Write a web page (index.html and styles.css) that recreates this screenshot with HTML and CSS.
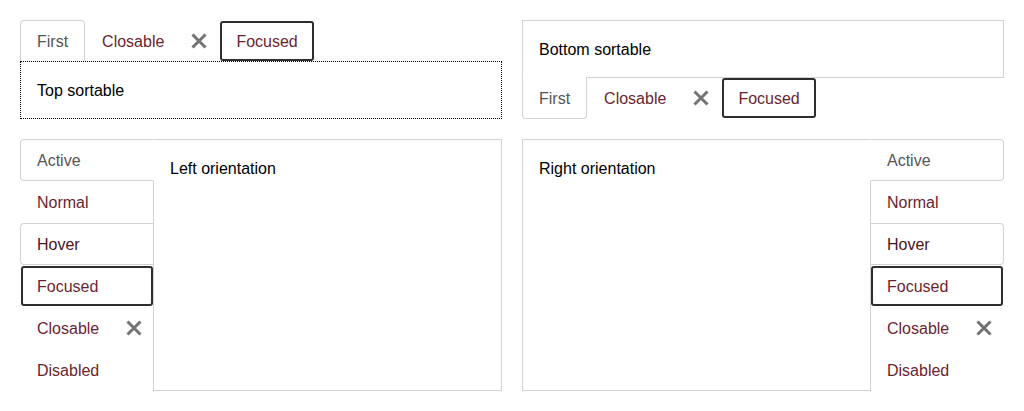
FILE: index.html
```html
<!DOCTYPE html>
<html lang="en">
<head>
<meta charset="utf-8">
<title>Tabs</title>
<link rel="stylesheet" href="styles.css">
</head>
<body>
<div class="grid">
  <div class="tabs tabs-top">
    <div class="tablist">
      <div class="tab active">First</div>
      <div class="tab closable">Closable<span class="close"><svg viewBox="0 0 16 16" width="16" height="16"><path d="M1.5 1.5L14.5 14.5M14.5 1.5L1.5 14.5"/></svg></span></div>
      <div class="tab focused">Focused</div>
    </div>
    <div class="panel panel-focus">Top sortable</div>
  </div>

  <div class="tabs tabs-bottom">
    <div class="panel">Bottom sortable</div>
    <div class="tablist">
      <div class="tab active">First</div>
      <div class="tab closable">Closable<span class="close"><svg viewBox="0 0 16 16" width="16" height="16"><path d="M1.5 1.5L14.5 14.5M14.5 1.5L1.5 14.5"/></svg></span></div>
      <div class="tab focused">Focused</div>
    </div>
  </div>

  <div class="tabs tabs-left">
    <div class="tablist">
      <div class="tab active">Active</div>
      <div class="tab">Normal</div>
      <div class="tab hover">Hover</div>
      <div class="tab focused">Focused</div>
      <div class="tab closable">Closable<span class="close"><svg viewBox="0 0 16 16" width="16" height="16"><path d="M1.5 1.5L14.5 14.5M14.5 1.5L1.5 14.5"/></svg></span></div>
      <div class="tab disabled">Disabled</div>
    </div>
    <div class="panel">Left orientation</div>
  </div>

  <div class="tabs tabs-right">
    <div class="panel">Right orientation</div>
    <div class="tablist">
      <div class="tab active">Active</div>
      <div class="tab">Normal</div>
      <div class="tab hover">Hover</div>
      <div class="tab focused">Focused</div>
      <div class="tab closable">Closable<span class="close"><svg viewBox="0 0 16 16" width="16" height="16"><path d="M1.5 1.5L14.5 14.5M14.5 1.5L1.5 14.5"/></svg></span></div>
      <div class="tab disabled">Disabled</div>
    </div>
  </div>
</div>
</body>
</html>
```

FILE: styles.css
```css
* { box-sizing: border-box; }

html, body {
  margin: 0;
  background: #fff;
}

body {
  font-family: "Liberation Sans", Arial, sans-serif;
  font-size: 16px;
  line-height: 24px;
  color: #000;
}

.grid {
  display: grid;
  grid-template-columns: 482px 482px;
  grid-template-rows: 99px 252px;
  gap: 20px;
  padding: 20px;
}

.tabs {
  display: flex;
}

.tabs-top,
.tabs-bottom {
  flex-direction: column;
  align-items: stretch;
}

.tablist {
  display: flex;
}

.tab {
  display: flex;
  align-items: center;
  height: 42px;
  padding: 9px 16px 7px;
  border: 1px solid transparent;
  color: #6b1f30;
  white-space: nowrap;
  background: transparent;
}

.tab.active {
  color: #555;
  border-color: #d2d2d2;
  background: #fff;
  position: relative;
  z-index: 1;
}

.tab.hover {
  color: #4a1322;
  border-color: #d2d2d2;
}

.tab.focused {
  outline: 2px solid #2e2e2e;
  outline-offset: -3px;
  border-radius: 4px;
}

.tab.closable {
  padding-right: 3px;
}

.close {
  display: flex;
  align-items: center;
  justify-content: center;
  width: 32px;
  height: 24px;
  margin-left: 19px;
  margin-top: -2px;
  flex: none;
}

.close svg path {
  stroke: #737373;
  stroke-width: 3;
  fill: none;
}

.panel {
  border: 1px solid #d2d2d2;
  padding: 17px 16px 15px;
  background: #fff;
}

.panel-focus {
  border: 1px dotted #000;
  position: relative;
  z-index: 2;
}

/* top */
.tabs-top .tablist { margin-bottom: -1px; }
.tabs-top .tab.active {
  border-bottom-color: #fff;
  border-radius: 4px 4px 0 0;
}
.tabs-top .panel { flex: 1; }

/* bottom */
.tabs-bottom .panel { height: 58px; }
.tabs-bottom .tablist { margin-top: -1px; }
.tabs-bottom .tab.active {
  border-top-color: #fff;
  border-radius: 0 0 4px 4px;
}

/* vertical */
.tabs-left .tablist,
.tabs-right .tablist {
  flex-direction: column;
  width: 134px;
  flex: none;
}
.tabs-left .panel,
.tabs-right .panel { flex: 1; }

.tabs-left .tablist { margin-right: -1px; }
.tabs-left .tab.active {
  border-right-color: #fff;
  border-radius: 4px 0 0 4px;
}
.tabs-left .tab.hover {
  border-right-color: transparent;
  border-radius: 4px 0 0 4px;
}

.tabs-right .tablist { margin-left: -1px; }
.tabs-right .tab.active {
  border-left-color: #fff;
  border-radius: 0 4px 4px 0;
}
.tabs-right .tab.hover {
  border-left-color: transparent;
  border-radius: 0 4px 4px 0;
}
```
